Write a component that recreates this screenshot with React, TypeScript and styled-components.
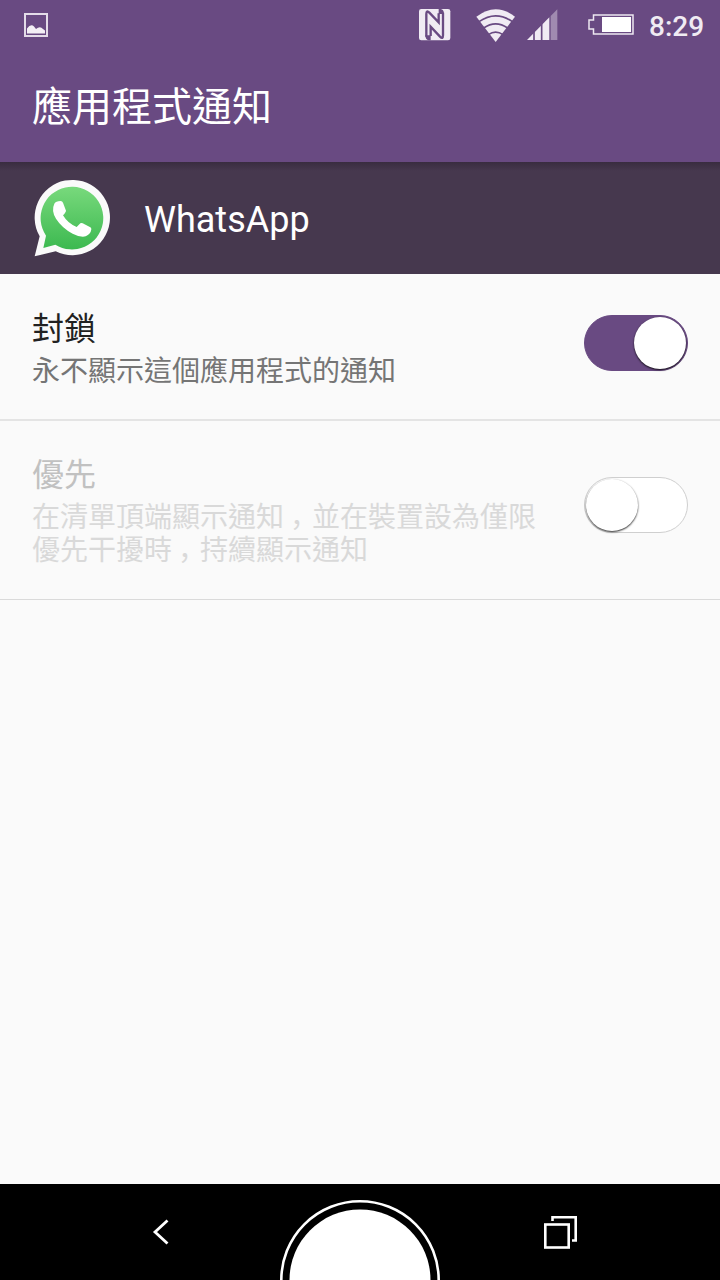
import React from "react";
import styled, { createGlobalStyle } from "styled-components";

const Global = createGlobalStyle`
  * { box-sizing: border-box; }
  body { margin: 0; background: #fafafa; font-family: Roboto, "Noto Sans CJK TC", sans-serif; }
`;

const Screen = styled.div`
  display: flex;
  flex-direction: column;
  width: 720px;
  height: 1280px;
  overflow: hidden;
  background: #fafafa;
`;

const StatusBar = styled.div`
  display: flex;
  align-items: center;
  height: 50px;
  padding: 0 16px 0 20px;
  background: #694a82;
`;

const StatusIcon = styled.svg<{ $gap?: number }>`
  flex: none;
  display: block;
  margin-left: ${(p) => p.$gap ?? 0}px;
`;

const Spacer = styled.div`
  flex: 1;
`;

const Clock = styled.div`
  margin-left: 15px;
  width: 55px;
  height: 34px;
  line-height: 37px;
  font-size: 28px;
  font-weight: 500;
  text-align: right;
  white-space: nowrap;
  color: #f0ebf3;
`;

const TitleBar = styled.header`
  height: 112px;
  padding: 29px 32px 0 32px;
  background: #694a82;
`;

const Title = styled.h1`
  margin: 0;
  font-size: 40px;
  line-height: 58px;
  font-weight: 400;
  color: #fff;
`;

const AppHeader = styled.section`
  display: flex;
  align-items: center;
  height: 112px;
  padding: 1px 32px 0;
  background: linear-gradient(#392c40 0, #46384e 9px);
`;

const AppName = styled.div`
  margin-left: 32px;
  padding-top: 2px;
  font-size: 36px;
  line-height: 44px;
  color: #fff;
`;

const Row = styled.div<{ $height: number; $top: number; $thin?: boolean }>`
  display: flex;
  justify-content: space-between;
  height: ${(p) => p.$height}px;
  padding: ${(p) => p.$top}px 32px 0;
  border-bottom: ${(p) => (p.$thin ? "1px solid #dadada" : "2px solid #e4e4e4")};
`;

const RowText = styled.div`
  width: 520px;
`;

const Label = styled.div<{ $disabled?: boolean }>`
  font-size: 32px;
  line-height: 42px;
  color: ${(p) => (p.$disabled ? "#c1c1c1" : "#212121")};
`;

const Detail = styled.div<{ $disabled?: boolean }>`
  font-family: "Noto Sans CJK TC", sans-serif;
  font-size: 28px;
  line-height: 33px;
  margin-top: 3px;
  color: ${(p) => (p.$disabled ? "#d9d9d9" : "#757575")};
`;

const Comma = styled.span`
  font-family: "Noto Sans CJK JP", sans-serif;
  padding-left: 6px;
  letter-spacing: -6px;
  line-height: 0;
`;

const Track = styled.div<{ $on?: boolean; $top: number }>`
  display: flex;
  flex: none;
  justify-content: ${(p) => (p.$on ? "flex-end" : "flex-start")};
  width: 104px;
  height: 56px;
  margin-top: ${(p) => p.$top}px;
  padding: 1px 0;
  border: 1px solid ${(p) => (p.$on ? "#694a82" : "#cfcfcf")};
  border-radius: 28px;
  background: ${(p) => (p.$on ? "#694a82" : "#fff")};
`;

const Thumb = styled.div`
  width: 52px;
  height: 52px;
  margin: 0 1px;
  border-radius: 50%;
  background: #fff;
  box-shadow: 0 1px 2px rgba(0, 0, 0, 0.85);
`;

const NavBar = styled.nav`
  display: flex;
  height: 96px;
  margin-top: auto;
  padding-left: 152px;
  background: #000;
  overflow: hidden;
`;

const NavIcon = styled.svg<{ $top: number; $gap?: number }>`
  flex: none;
  display: block;
  margin-top: ${(p) => p.$top}px;
  margin-left: ${(p) => p.$gap ?? 0}px;
`;

const PictureIcon = () => (
  <StatusIcon width="32" height="32" viewBox="20 9 32 32" fill="none">
    <rect x="25" y="14" width="22" height="22" stroke="#e4dce9" strokeWidth="2" />
    <path d="M27 33.5V28.5Q31 23 34 26.5L36 29Q40 25.5 43 29L45 30.5V33.5Z" fill="#f3eff5" />
  </StatusIcon>
);

const NfcIcon = () => (
  <StatusIcon width="32" height="32" viewBox="57 27 96 96">
    <rect x="57" y="27" width="94" height="94" rx="7" fill="#f0ebf3" />
    <path
      d="M79 110V42Q79 29 88 38L116 67V40M129 38V106Q129 119 120 110L92 80V108"
      fill="none"
      stroke="#694a82"
      strokeWidth="7"
    />
    <path d="M76 106L92 106V121H86Q76 120 76 106ZM132 42L116 42V27H122Q132 28 132 42Z" fill="#694a82" />
  </StatusIcon>
);

const WifiIcon = () => (
  <StatusIcon $gap={25} width="40" height="34" viewBox="229 27 120 102">
    <path d="M230 53Q288 8 346 53L288 129Z" fill="#f0ebf3" />
    <g fill="none" stroke="#694a82" strokeWidth="5">
      <path d="M238 68Q288 33 338 68M252 87Q288 62 324 87M266 107Q288 92 310 107" />
    </g>
  </StatusIcon>
);

const SignalIcon = () => (
  <StatusIcon $gap={11} width="31" height="32" viewBox="380 30 93 96">
    <path d="M380 123L447 55V123Z" fill="#f0ebf3" />
    <path d="M451 51L471 31V123H451Z" fill="#a08bb0" />
    <path d="M401 90V125M424 70V125" stroke="#694a82" strokeWidth="5" />
  </StatusIcon>
);

const BatteryIcon = () => (
  <StatusIcon $gap={30} width="46" height="22" viewBox="588 14 46 22">
    <path d="M593.5 15H633V34H593.5V29H589V20H593.5Z" fill="none" stroke="#ede7f1" strokeWidth="1.5" />
    <rect x="602" y="17" width="29" height="15" fill="#fff" />
  </StatusIcon>
);

const WhatsAppIcon = () => (
  <svg width="80" height="80" viewBox="36 54 240 240">
    <defs>
      <linearGradient id="leaf" x1="0" y1="0" x2="0" y2="1">
        <stop offset="0" stopColor="#78d97c" />
        <stop offset="1" stopColor="#3cb950" />
      </linearGradient>
    </defs>
    <path d="M59 226A113 113 0 1 1 107 271L44 286Z" fill="#fafafa" />
    <path d="M78 224A94 94 0 1 1 106 251L70 261Z" fill="url(#leaf)" />
    <path d="M103 128Q107 120 122 120Q127 120 129 125L138 149Q138 153 129 163Q143 187 170 198L181 187Q184 185 188 187L211 199Q214 201 214 205Q212 220 197 226Q181 230 158 218Q126 201 108 173Q93 149 103 128Z" fill="#fff" />
  </svg>
);

const BackIcon = () => (
  <NavIcon $top={34} width="20" height="28" viewBox="152 1218 20 28" fill="none">
    <path d="M167.5 1220.5L155 1232L167.5 1243.5" stroke="#fff" strokeWidth="2.8" />
  </NavIcon>
);

const HomeIcon = () => (
  <NavIcon $top={16} $gap={108} width="160" height="80" viewBox="0 0 160 80">
    <circle cx="80" cy="80" r="78.7" fill="none" stroke="#fff" strokeWidth="2.6" />
    <circle cx="80" cy="80" r="70.5" fill="#fff" />
  </NavIcon>
);

const RecentsIcon = () => (
  <NavIcon
    $top={31}
    $gap={103}
    width="36"
    height="36"
    viewBox="543 1215 36 36"
    fill="none"
    stroke="#fff"
    strokeWidth="2.6"
  >
    <rect x="545.3" y="1224.5" width="23.4" height="23" />
    <path d="M552.5 1221V1217.3H575.7V1240.5H572" />
  </NavIcon>
);

export default function App() {
  return (
    <>
      <Global />
      <Screen>
        <StatusBar>
          <PictureIcon />
          <Spacer />
          <NfcIcon />
          <WifiIcon />
          <SignalIcon />
          <BatteryIcon />
          <Clock>8:29</Clock>
        </StatusBar>
        <TitleBar>
          <Title>應用程式通知</Title>
        </TitleBar>
        <AppHeader>
          <WhatsAppIcon />
          <AppName>WhatsApp</AppName>
        </AppHeader>
        <Row $height={147} $top={34}>
          <RowText>
            <Label>封鎖</Label>
            <Detail>永不顯示這個應用程式的通知</Detail>
          </RowText>
          <Track $on $top={7}>
            <Thumb />
          </Track>
        </Row>
        <Row $height={179} $top={33} $thin>
          <RowText>
            <Label $disabled>優先</Label>
            <Detail $disabled>
              在清單頂端顯示通知<Comma>，</Comma>並在裝置設為僅限
              <br />
              優先干擾時<Comma>，</Comma>持續顯示通知
            </Detail>
          </RowText>
          <Track $top={23}>
            <Thumb />
          </Track>
        </Row>
        <NavBar>
          <BackIcon />
          <HomeIcon />
          <RecentsIcon />
        </NavBar>
      </Screen>
    </>
  );
}
